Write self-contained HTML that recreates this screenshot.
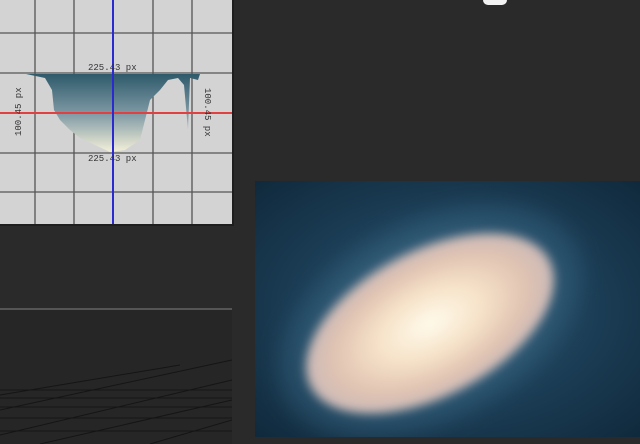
<!DOCTYPE html>
<html style="overflow:hidden"><head><style>
body{margin:0;width:640px;height:444px;background:#2a2a2a;position:relative;overflow:hidden;font-family:"Liberation Mono",monospace}
.p{position:absolute}
</style></head><body>
<div class="p" style="left:0;top:0;width:232px;height:224px;background:#d3d3d3;border-right:2px solid #1e1e1e;border-bottom:2px solid #1e1e1e"></div>
<svg class="p" style="left:0;top:0" width="232" height="224">
<g stroke="#555" stroke-width="1.3">
<line x1="35" y1="0" x2="35" y2="224"/><line x1="74" y1="0" x2="74" y2="224"/><line x1="153" y1="0" x2="153" y2="224"/><line x1="192" y1="0" x2="192" y2="224"/>
<line x1="0" y1="33" x2="232" y2="33"/><line x1="0" y1="73" x2="232" y2="73"/><line x1="0" y1="153" x2="232" y2="153"/><line x1="0" y1="192" x2="232" y2="192"/>
</g>
<defs><linearGradient id="g" x1="0" y1="0" x2="0" y2="1"><stop offset="0" stop-color="#2e5a6a"/><stop offset=".5" stop-color="#7d98a4"/><stop offset="1" stop-color="#f4f0d8"/></linearGradient></defs>
<path d="M26 74 L200 74 L198 80 L190 78 L188 130 L184 85 L178 78 L168 80 L160 90 L150 100 L140 140 L125 150 L110 152 L95 145 L80 138 L70 130 L60 120 L54 110 L52 90 L45 78 Z" fill="url(#g)"/>
<line x1="0" y1="113" x2="232" y2="113" stroke="#e04040" stroke-width="2"/>
<line x1="113" y1="0" x2="113" y2="224" stroke="#2a2ad0" stroke-width="2"/>
<g font-family="Liberation Mono" font-size="9" fill="#333">
<text x="88" y="70">225.43 px</text><text x="88" y="161">225.43 px</text>
<text transform="translate(21,136) rotate(-90)">100.45 px</text>
<text transform="translate(205,88) rotate(90)">100.45 px</text>
</g></svg>
<div class="p" style="left:0;top:308px;width:232px;height:2px;background:#555"></div>
<svg class="p" style="left:0;top:310px;display:block" width="232" height="134">
<rect width="232" height="134" fill="#262626"/>
<g stroke="#151515" stroke-width="1">
<line x1="0" y1="80" x2="232" y2="80"/><line x1="0" y1="88" x2="232" y2="88"/><line x1="0" y1="97" x2="232" y2="97"/><line x1="0" y1="108" x2="232" y2="108"/><line x1="0" y1="121" x2="232" y2="121"/>
<line x1="0" y1="100" x2="232" y2="50"/><line x1="0" y1="125" x2="232" y2="70"/><line x1="40" y1="134" x2="232" y2="90"/><line x1="150" y1="134" x2="232" y2="110"/><line x1="0" y1="85" x2="180" y2="55"/>
</g></svg>
<div class="p" style="left:255px;top:181px;width:385px;height:256px;overflow:hidden;background:radial-gradient(ellipse at 50% 50%,#2d5670 0%,#1b3d55 55%,#10293c 100%)">
<div class="p" style="left:10px;top:40px;width:330px;height:200px;transform:rotate(-28deg);border-radius:50%;filter:blur(10px);background:radial-gradient(ellipse at 50% 50%,rgba(120,160,190,.6) 0%,rgba(60,110,140,.4) 60%,rgba(40,80,110,0) 100%)"></div>
<div class="p" style="left:40px;top:70px;width:270px;height:145px;transform:rotate(-28deg);border-radius:50%;filter:blur(5px);background:radial-gradient(ellipse at 50% 50%,#fffbec 0%,#f6e2c8 30%,#e0c3b2 55%,#c8b8b8 72%,rgba(150,175,195,.7) 85%,rgba(60,100,130,0) 100%)"></div>
</div>
<div class="p" style="left:483px;top:0;width:24px;height:5px;border-radius:0 0 12px 12px;background:#f2f2f2"></div>
</body></html>
